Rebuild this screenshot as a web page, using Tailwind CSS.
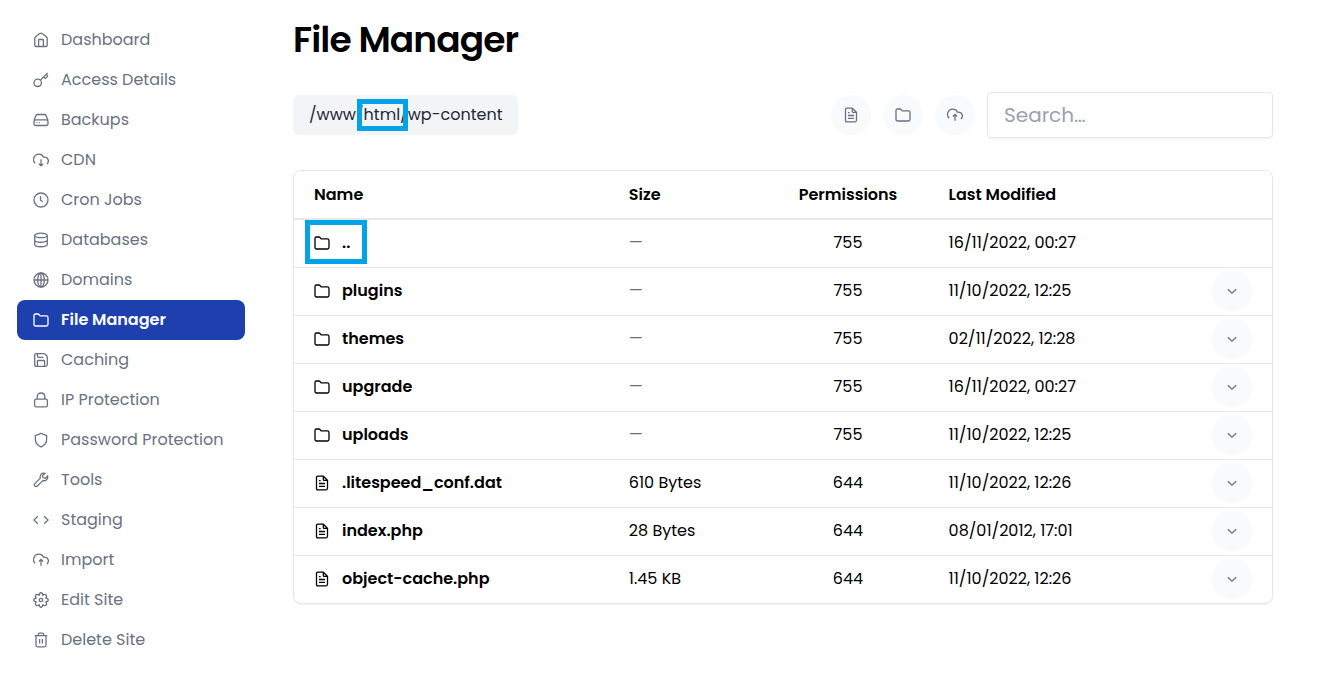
<!DOCTYPE html>
<html lang="en">
<head>
  <meta charset="UTF-8">
  <meta name="viewport" content="width=device-width, initial-scale=1.0">
  <title>File Manager</title>
  <script src="https://cdn.jsdelivr.net/npm/@tailwindcss/browser@4"></script>
</head>
<body class="min-h-screen bg-white font-['Poppins','Inter',sans-serif] text-base text-black">

  <!-- Icon sprite -->
  <svg class="hidden" xmlns="http://www.w3.org/2000/svg">
    <symbol id="home" viewBox="0 0 16 16"><path d="M1.8 6.4Q1.8 5.6 2.4 5L6.7 1.5Q8 .6 9.3 1.5L13.6 5Q14.2 5.6 14.2 6.4V13.2Q14.2 14.5 12.7 14.5H3.3Q1.8 14.5 1.8 13.2ZM5.6 14.5V8.3Q5.6 7.5 6.4 7.5H9.6Q10.4 7.5 10.4 8.3V14.5"/></symbol>
    <symbol id="key" viewBox="0 0 16 16"><circle cx="4.7" cy="10.8" r="3.7"/><path d="M7.5 8L14.6 .9M10.6 4.9L11.7 6Q12.3 6.5 12.9 6L14.3 4.6Q14.8 4 14.3 3.4L13.2 2.3"/></symbol>
    <symbol id="drive" viewBox="0 0 16 16"><path d="M1 8.2L3 3.4Q3.4 2.5 4.4 2.5H11.6Q12.6 2.5 13 3.4L15 8.2M3 7.8H13Q15 7.8 15 9.8V11.5Q15 13.5 13 13.5H3Q1 13.5 1 11.5V9.8Q1 7.8 3 7.8ZM3.6 10.7H4.4M6.2 10.7H7"/></symbol>
    <symbol id="cloud-down" viewBox="0 0 16 16"><path d="M2.2 11.3C.6 10 .1 8.5.6 6.6 1.2 4 3.3 2.2 5.9 2.2 8 2.2 9.7 3.3 10.5 5.2 12.8 5 14.6 6 15.2 7.8 15.7 9.3 15.1 10.8 13.9 11.9M8 7.2V13.8M5.9 11.7L8 13.8 10.1 11.7"/></symbol>
    <symbol id="cloud-up" viewBox="0 0 16 16"><path d="M2.2 11.3C.6 10 .1 8.5.6 6.6 1.2 4 3.3 2.2 5.9 2.2 8 2.2 9.7 3.3 10.5 5.2 12.8 5 14.6 6 15.2 7.8 15.7 9.3 15.1 10.8 13.9 11.9M8 13.8V7.4M5.9 9.5L8 7.4 10.1 9.5"/></symbol>
    <symbol id="clock" viewBox="0 0 16 16"><circle cx="8" cy="8" r="7"/><path d="M7.5 4V8.2L10 9.7"/></symbol>
    <symbol id="database" viewBox="0 0 16 16"><ellipse cx="8" cy="3.4" rx="6.3" ry="2.3"/><path d="M1.7 3.4V12.5C1.7 15.5 14.3 15.5 14.3 12.5V3.4M1.7 8C1.7 11 14.3 11 14.3 8"/></symbol>
    <symbol id="globe" viewBox="0 0 16 16"><circle cx="8" cy="8" r="7"/><ellipse cx="8" cy="8" rx="3.3" ry="7"/><path d="M1 8H15M8 1V15"/></symbol>
    <symbol id="folder" viewBox="0 0 16 16"><path d="M1 3.5Q1 2 2.5 2H5Q5.8 2 6.2 2.7L6.6 3.4Q6.9 3.9 7.5 3.9H13.3Q15 3.9 15 5.6V12.3Q15 14 13.3 14H2.7Q1 14 1 12.3Z"/></symbol>
    <symbol id="save" viewBox="0 0 16 16"><path d="M1.7 3.2Q1.7 1.7 3.2 1.7H10.7Q11.6 1.7 12.2 2.3L13.7 3.8Q14.3 4.4 14.3 5.3V12.8Q14.3 14.3 12.8 14.3H3.2Q1.7 14.3 1.7 12.8ZM4.4 14V9.3Q4.4 8.5 5.2 8.5H10.8Q11.6 8.5 11.6 9.3V14M4.5 1.8V4.6Q4.5 5.4 5.3 5.4H10.4"/></symbol>
    <symbol id="lock" viewBox="0 0 16 16"><rect x="1.6" y="7.2" width="12.8" height="7.6" rx="1.6"/><path d="M4.2 7V4.8C4.2 2.5 5.8 1 8 1S11.8 2.5 11.8 4.8V7"/></symbol>
    <symbol id="shield" viewBox="0 0 16 16"><path d="M8 1.2Q10.8 3 13.6 3.3V8C13.6 11.2 11.3 13.3 8 14.8 4.7 13.3 2.4 11.2 2.4 8V3.3Q5.2 3 8 1.2Z"/></symbol>
    <symbol id="wrench" viewBox="0 0 16 16"><path d="M11.9 1.3C8.8.8 6.6 3.1 7.3 6.1L1.9 11.6C1.1 12.4 1.1 13.4 1.8 14.1S3.6 14.8 4.4 14L9.8 8.6C12.8 9.3 15.2 7 14.6 4.1L12.3 6.3 10 5.8 9.6 3.6ZM3.3 12.7H3.4"/></symbol>
    <symbol id="code" viewBox="0 0 16 16"><path d="M4.8 4.2L1 8 4.8 11.8M11.2 4.2L15 8 11.2 11.8"/></symbol>
    <symbol id="gear" viewBox="0 0 16 16"><path stroke-linejoin="round" d="M6.1 3.3C6.5-.1 9.5-.1 9.9 3.3C12.6 1.2 14.8 3.4 12.7 6.1C16.1 6.5 16.1 9.5 12.7 9.9C14.8 12.6 12.6 14.8 9.9 12.7C9.5 16.1 6.5 16.1 6.1 12.7C3.4 14.8 1.2 12.6 3.3 9.9C-.1 9.5-.1 6.5 3.3 6.1C1.2 3.4 3.4 1.2 6.1 3.3Z"/><circle cx="8" cy="8" r="1.7"/></symbol>
    <symbol id="trash" viewBox="0 0 16 16"><path d="M1.7 3.7H14.3M3 3.7V13.3Q3 14.8 4.5 14.8H11.5Q13 14.8 13 13.3V3.7M5.3 3.5V2.4Q5.3 1.2 6.5 1.2H9.5Q10.7 1.2 10.7 2.4V3.5M6.6 7V11.5M9.4 7V11.5"/></symbol>
    <symbol id="file" viewBox="0 0 16 16"><path d="M2.5 2.7Q2.5 1.2 4 1.2H9.3L13.5 5.3V13.3Q13.5 14.8 12 14.8H4Q2.5 14.8 2.5 13.3ZM9.3 1.4V4.4Q9.3 5.3 10.2 5.3H13.3M5 5.7H6.6M5 8.5H11M5 11.3H11"/></symbol>
    <symbol id="chevron" viewBox="0 0 16 16"><path d="M3.8 6.2L8 10.2 12.2 6.2"/></symbol>
  </svg>

  <div class="flex pt-5 pr-[47px] pl-[17px]">

    <!-- Sidebar -->
    <nav class="w-57 shrink-0 text-gray-500" aria-label="Site">
      <a href="#" class="flex h-10 items-center gap-3 rounded-lg px-4"><svg class="size-4 shrink-0 fill-none stroke-current stroke-[1.3]"><use href="#home"/></svg>Dashboard</a>
      <a href="#" class="flex h-10 items-center gap-3 rounded-lg px-4"><svg class="size-4 shrink-0 fill-none stroke-current stroke-[1.3]"><use href="#key"/></svg>Access Details</a>
      <a href="#" class="flex h-10 items-center gap-3 rounded-lg px-4"><svg class="size-4 shrink-0 fill-none stroke-current stroke-[1.3]"><use href="#drive"/></svg>Backups</a>
      <a href="#" class="flex h-10 items-center gap-3 rounded-lg px-4"><svg class="size-4 shrink-0 fill-none stroke-current stroke-[1.3]"><use href="#cloud-down"/></svg>CDN</a>
      <a href="#" class="flex h-10 items-center gap-3 rounded-lg px-4"><svg class="size-4 shrink-0 fill-none stroke-current stroke-[1.3]"><use href="#clock"/></svg>Cron Jobs</a>
      <a href="#" class="flex h-10 items-center gap-3 rounded-lg px-4"><svg class="size-4 shrink-0 fill-none stroke-current stroke-[1.3]"><use href="#database"/></svg>Databases</a>
      <a href="#" class="flex h-10 items-center gap-3 rounded-lg px-4"><svg class="size-4 shrink-0 fill-none stroke-current stroke-[1.3]"><use href="#globe"/></svg>Domains</a>
      <a href="#" class="flex h-10 items-center gap-3 rounded-lg bg-[#1e40af] px-4 font-semibold text-white" aria-current="page"><svg class="size-4 shrink-0 fill-none stroke-current stroke-[1.3]"><use href="#folder"/></svg>File Manager</a>
      <a href="#" class="flex h-10 items-center gap-3 rounded-lg px-4"><svg class="size-4 shrink-0 fill-none stroke-current stroke-[1.3]"><use href="#save"/></svg>Caching</a>
      <a href="#" class="flex h-10 items-center gap-3 rounded-lg px-4"><svg class="size-4 shrink-0 fill-none stroke-current stroke-[1.3]"><use href="#lock"/></svg>IP Protection</a>
      <a href="#" class="flex h-10 items-center gap-3 rounded-lg px-4"><svg class="size-4 shrink-0 fill-none stroke-current stroke-[1.3]"><use href="#shield"/></svg>Password Protection</a>
      <a href="#" class="flex h-10 items-center gap-3 rounded-lg px-4"><svg class="size-4 shrink-0 fill-none stroke-current stroke-[1.3]"><use href="#wrench"/></svg>Tools</a>
      <a href="#" class="flex h-10 items-center gap-3 rounded-lg px-4"><svg class="size-4 shrink-0 fill-none stroke-current stroke-[1.3]"><use href="#code"/></svg>Staging</a>
      <a href="#" class="flex h-10 items-center gap-3 rounded-lg px-4"><svg class="size-4 shrink-0 fill-none stroke-current stroke-[1.3]"><use href="#cloud-up"/></svg>Import</a>
      <a href="#" class="flex h-10 items-center gap-3 rounded-lg px-4"><svg class="size-4 shrink-0 fill-none stroke-current stroke-[1.3]"><use href="#gear"/></svg>Edit Site</a>
      <a href="#" class="flex h-10 items-center gap-3 rounded-lg px-4"><svg class="size-4 shrink-0 fill-none stroke-current stroke-[1.3]"><use href="#trash"/></svg>Delete Site</a>
    </nav>

    <main class="ml-12 min-w-0 flex-1">
      <h1 class="text-4xl font-semibold tracking-tight">File Manager</h1>

      <!-- Path and toolbar -->
      <div class="mt-8 flex items-center justify-between">
        <div class="flex h-10 items-center rounded-md bg-gray-100 px-4 text-gray-800">
          <a href="#">/www</a>/<a href="#" class="relative">html/<span class="absolute -inset-y-1 right-0 -left-[7px] border-5 border-[#00a2e8]"></span></a><a href="#">wp-content</a>
        </div>
        <div class="flex items-center gap-3">
          <button type="button" aria-label="New file" class="grid size-10 place-items-center rounded-full bg-gray-50 text-gray-500"><svg class="size-4 fill-none stroke-current stroke-[1.3]"><use href="#file"/></svg></button>
          <button type="button" aria-label="New folder" class="grid size-10 place-items-center rounded-full bg-gray-50 text-gray-500"><svg class="size-4 fill-none stroke-current stroke-[1.3]"><use href="#folder"/></svg></button>
          <button type="button" aria-label="Upload" class="grid size-10 place-items-center rounded-full bg-gray-50 text-gray-500"><svg class="size-4 fill-none stroke-current stroke-[1.3]"><use href="#cloud-up"/></svg></button>
          <input type="search" aria-label="Search files" placeholder="Search…" class="h-[46px] w-[286px] rounded border border-gray-200 px-4 text-xl shadow-xs placeholder:text-gray-400">
        </div>
      </div>

      <!-- File list -->
      <div class="mt-8 rounded-lg border border-gray-200 shadow-xs">
        <table class="w-full table-fixed text-left">
          <thead>
            <tr class="h-12 border-b-2 border-gray-200 font-semibold">
              <th class="w-[32.6%] pl-5 font-semibold">Name</th>
              <th class="w-[15.4%] px-4 font-semibold">Size</th>
              <th class="w-[17.3%] px-4 text-center font-semibold">Permissions</th>
              <th class="px-4 font-semibold">Last Modified</th>
              <th class="w-20"></th>
            </tr>
          </thead>
          <tbody class="divide-y divide-gray-200">
            <tr class="h-12">
              <td class="pl-5 font-semibold"><a href="#" class="relative flex w-fit items-center gap-3"><svg class="size-4 fill-none stroke-current stroke-[1.3]"><use href="#folder"/></svg>..<span class="absolute -top-[11px] -left-[9px] h-11 w-[62px] border-5 border-[#00a2e8]"></span></a></td>
              <td class="px-4 text-gray-500">—</td>
              <td class="px-4 text-center">755</td>
              <td class="px-4">16/11/2022, 00:27</td>
              <td></td>
            </tr>
            <tr class="h-12">
              <td class="pl-5 font-semibold"><a href="#" class="flex w-fit items-center gap-3"><svg class="size-4 fill-none stroke-current stroke-[1.3]"><use href="#folder"/></svg>plugins</a></td>
              <td class="px-4 text-gray-500">—</td>
              <td class="px-4 text-center">755</td>
              <td class="px-4">11/10/2022, 12:25</td>
              <td class="pl-5"><button type="button" aria-label="Actions for plugins" class="grid size-10 place-items-center rounded-full bg-gray-50 text-gray-500"><svg class="size-4 fill-none stroke-current stroke-[1.3]"><use href="#chevron"/></svg></button></td>
            </tr>
            <tr class="h-12">
              <td class="pl-5 font-semibold"><a href="#" class="flex w-fit items-center gap-3"><svg class="size-4 fill-none stroke-current stroke-[1.3]"><use href="#folder"/></svg>themes</a></td>
              <td class="px-4 text-gray-500">—</td>
              <td class="px-4 text-center">755</td>
              <td class="px-4">02/11/2022, 12:28</td>
              <td class="pl-5"><button type="button" aria-label="Actions for themes" class="grid size-10 place-items-center rounded-full bg-gray-50 text-gray-500"><svg class="size-4 fill-none stroke-current stroke-[1.3]"><use href="#chevron"/></svg></button></td>
            </tr>
            <tr class="h-12">
              <td class="pl-5 font-semibold"><a href="#" class="flex w-fit items-center gap-3"><svg class="size-4 fill-none stroke-current stroke-[1.3]"><use href="#folder"/></svg>upgrade</a></td>
              <td class="px-4 text-gray-500">—</td>
              <td class="px-4 text-center">755</td>
              <td class="px-4">16/11/2022, 00:27</td>
              <td class="pl-5"><button type="button" aria-label="Actions for upgrade" class="grid size-10 place-items-center rounded-full bg-gray-50 text-gray-500"><svg class="size-4 fill-none stroke-current stroke-[1.3]"><use href="#chevron"/></svg></button></td>
            </tr>
            <tr class="h-12">
              <td class="pl-5 font-semibold"><a href="#" class="flex w-fit items-center gap-3"><svg class="size-4 fill-none stroke-current stroke-[1.3]"><use href="#folder"/></svg>uploads</a></td>
              <td class="px-4 text-gray-500">—</td>
              <td class="px-4 text-center">755</td>
              <td class="px-4">11/10/2022, 12:25</td>
              <td class="pl-5"><button type="button" aria-label="Actions for uploads" class="grid size-10 place-items-center rounded-full bg-gray-50 text-gray-500"><svg class="size-4 fill-none stroke-current stroke-[1.3]"><use href="#chevron"/></svg></button></td>
            </tr>
            <tr class="h-12">
              <td class="pl-5 font-semibold"><a href="#" class="flex w-fit items-center gap-3"><svg class="size-4 fill-none stroke-current stroke-[1.3]"><use href="#file"/></svg>.litespeed_conf.dat</a></td>
              <td class="px-4">610 Bytes</td>
              <td class="px-4 text-center">644</td>
              <td class="px-4">11/10/2022, 12:26</td>
              <td class="pl-5"><button type="button" aria-label="Actions for .litespeed_conf.dat" class="grid size-10 place-items-center rounded-full bg-gray-50 text-gray-500"><svg class="size-4 fill-none stroke-current stroke-[1.3]"><use href="#chevron"/></svg></button></td>
            </tr>
            <tr class="h-12">
              <td class="pl-5 font-semibold"><a href="#" class="flex w-fit items-center gap-3"><svg class="size-4 fill-none stroke-current stroke-[1.3]"><use href="#file"/></svg>index.php</a></td>
              <td class="px-4">28 Bytes</td>
              <td class="px-4 text-center">644</td>
              <td class="px-4">08/01/2012, 17:01</td>
              <td class="pl-5"><button type="button" aria-label="Actions for index.php" class="grid size-10 place-items-center rounded-full bg-gray-50 text-gray-500"><svg class="size-4 fill-none stroke-current stroke-[1.3]"><use href="#chevron"/></svg></button></td>
            </tr>
            <tr class="h-12">
              <td class="pl-5 font-semibold"><a href="#" class="flex w-fit items-center gap-3"><svg class="size-4 fill-none stroke-current stroke-[1.3]"><use href="#file"/></svg>object-cache.php</a></td>
              <td class="px-4">1.45 KB</td>
              <td class="px-4 text-center">644</td>
              <td class="px-4">11/10/2022, 12:26</td>
              <td class="pl-5"><button type="button" aria-label="Actions for object-cache.php" class="grid size-10 place-items-center rounded-full bg-gray-50 text-gray-500"><svg class="size-4 fill-none stroke-current stroke-[1.3]"><use href="#chevron"/></svg></button></td>
            </tr>
          </tbody>
        </table>
      </div>
    </main>
  </div>

</body>
</html>
